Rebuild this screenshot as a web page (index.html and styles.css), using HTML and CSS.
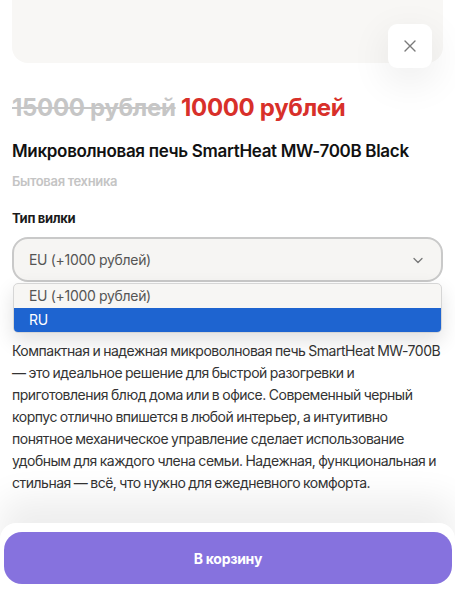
FILE: index.html
```html
<!DOCTYPE html>
<html lang="ru">
  <head>
    <meta charset="UTF-8" />
    <meta name="viewport" content="width=device-width, initial-scale=1.0" />
    <title>Микроволновая печь SmartHeat MW-700B Black</title>
    <link rel="stylesheet" href="styles.css">
  </head>
  <body>
    <div class="sheet">
      <!-- Карточка товара -->
      <div class="content">
        <div class="photo"></div>
        <button class="close" aria-label="Закрыть">
          <svg width="14" height="14" viewBox="0 0 14 14">
            <path d="M2 2L12 12M12 2L2 12" stroke="#7a7a7a" stroke-width="1.4" stroke-linecap="round" />
          </svg>
        </button>

        <div class="price">
          <span class="price-old">15000 рублей</span>
          <span class="price-new">10000 рублей</span>
        </div>
        <h1 class="title">Микроволновая печь SmartHeat MW-700B Black</h1>
        <div class="category">Бытовая техника</div>

        <div class="field">
          <div class="field-label">Тип вилки</div>
          <div class="select">
            <span>EU (+1000 рублей)</span>
            <svg width="14" height="14" viewBox="0 0 14 14">
              <path d="M3 5.5L7 9.5L11 5.5" fill="none" stroke="#777" stroke-width="1.3" stroke-linecap="round" stroke-linejoin="round" />
            </svg>
          </div>
          <ul class="options">
            <li>EU (+1000 рублей)</li>
            <li class="active">RU</li>
          </ul>
        </div>

        <p class="description">
          Компактная и надежная микроволновая печь SmartHeat MW-700B — это
          идеальное решение для быстрой разогревки и приготовления блюд дома
          или в офисе. Современный черный корпус отлично впишется в любой
          интерьер, а интуитивно понятное механическое управление сделает
          использование удобным для каждого члена семьи. Надежная,
          функциональная и стильная — всё, что нужно для ежедневного комфорта.
        </p>
      </div>

      <!-- Кнопка покупки -->
      <div class="footer">
        <button class="buy">В корзину</button>
      </div>
    </div>
  </body>
</html>
```

FILE: styles.css
```css
* {
  box-sizing: border-box;
}
body {
  margin: 0;
  font-family: Inter, "Noto Sans", sans-serif;
  letter-spacing: -0.02em;
  color: #1a1a1a;
  background: #fff;
}
.sheet {
  height: 590px;
  display: flex;
  flex-direction: column;
  overflow: hidden;
}
.content {
  position: relative;
  flex: 1;
  padding: 0 12px;
}
.photo {
  height: 63px;
  background: #f8f7f5;
  border-radius: 0 0 16px 16px;
}
.close {
  position: absolute;
  top: 24px;
  right: 23px;
  width: 44px;
  height: 44px;
  border: none;
  border-radius: 9px;
  background: #fff;
  display: flex;
  align-items: center;
  justify-content: center;
  box-shadow: 0 12px 40px rgba(0, 0, 0, 0.09);
}
.price {
  margin-top: 30px;
  font-size: 24px;
  line-height: 30px;
  font-weight: 700;
}
.price-old {
  color: #c6c6c6;
  text-decoration: line-through;
}
.price-new {
  color: #d8302a;
}
.title {
  margin: 17px 0 0;
  font-size: 17px;
  line-height: 22px;
  font-weight: 600;
  color: #111;
}
.category {
  margin-top: 10px;
  font-size: 13px;
  line-height: 18px;
  font-weight: 600;
  color: #c4c4c4;
}
.field {
  position: relative;
  margin-top: 19px;
}
.field-label {
  font-size: 13px;
  line-height: 18px;
  font-weight: 700;
  color: #1a1a1a;
}
.select {
  margin-top: 10px;
  height: 45px;
  padding: 0 16px 0 15px;
  border: 2px solid #c9c9c9;
  border-radius: 16px;
  background: #f6f5f3;
  display: flex;
  align-items: center;
  justify-content: space-between;
  font-size: 14px;
  color: #555;
}
.options {
  position: absolute;
  top: 74px;
  left: 1px;
  right: 1px;
  margin: 0;
  padding: 0;
  list-style: none;
  border: 1px solid #d6d6d6;
  border-radius: 5px;
  overflow: hidden;
  background: #f7f6f4;
  box-shadow: 0 8px 20px rgba(0, 0, 0, 0.12);
  font-size: 14px;
}
.options li {
  height: 24px;
  line-height: 24px;
  padding: 0 15px;
  color: #555;
}
.options li.active {
  background: #1e64d0;
  color: #fff;
}
.description {
  margin: 58px 0 0;
  font-size: 14px;
  line-height: 22px;
  letter-spacing: -0.035em;
  word-spacing: -0.5px;
  color: #333;
}
.footer {
  position: relative;
  padding: 9px 3px 6px 4px;
  background: #fff;
  border-radius: 16px 16px 0 0;
  box-shadow: 0 -25px 35px rgba(0, 0, 0, 0.07);
}
.buy {
  display: block;
  width: 100%;
  height: 52px;
  border: none;
  border-radius: 18px;
  background: #8672de;
  color: #fff;
  font-family: Inter, "Noto Sans", sans-serif;
  letter-spacing: -0.02em;
  font-size: 14px;
  font-weight: 700;
}
```
